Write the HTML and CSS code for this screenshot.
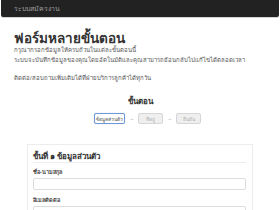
FILE: index.html
```html
<!DOCTYPE html>
<html lang="th">
<head>
<meta charset="utf-8">
<link rel="stylesheet" href="styles.css">
</head>
<body>
<nav class="navbar"><span class="brand">ระบบสมัครงาน</span></nav>
<main class="container">
  <h1 class="title">ฟอร์มหลายขั้นตอน</h1>
  <p class="lead">กรุณากรอกข้อมูลให้ครบถ้วนในแต่ละขั้นตอนนี้</p>
  <p class="lead">ระบบจะบันทึกข้อมูลของคุณโดยอัตโนมัติและคุณสามารถย้อนกลับไปแก้ไขได้ตลอดเวลา</p>
  <p class="note">ติดต่อ/สอบถามเพิ่มเติมได้ที่ฝ่ายบริการลูกค้าได้ทุกวัน</p>
  <section class="steps">
    <div class="steps-title">ขั้นตอน</div>
    <div class="steps-row">
      <span class="step active">ข้อมูลส่วนตัว</span>
      <span class="arrow">→</span>
      <span class="step">ที่อยู่</span>
      <span class="arrow">→</span>
      <span class="step">ยืนยัน</span>
    </div>
  </section>
  <section class="card">
    <h2 class="card-title">ขั้นที่ ๑ ข้อมูลส่วนตัว</h2>
    <label class="label">ชื่อ-นามสกุล</label>
    <div class="input"></div>
    <label class="label">อีเมลติดต่อ</label>
    <div class="input"></div>
  </section>
</main>
</body>
</html>
```
FILE: styles.css
```css
html, body {
  margin: 0;
  padding: 0;
  background: #fff;
}
body {
  font-family: "Liberation Sans", Arial, sans-serif;
  color: #333;
  width: 280px;
  height: 210px;
  overflow: hidden;
}
.navbar {
  height: 17px;
  margin: 0 1px;
  background: #222;
  border-bottom: 1px solid #d4d4d4;
  border-radius: 0 0 3px 3px;
  display: flex;
  align-items: center;
  padding-left: 13px;
}
.brand {
  color: #9d9d9d;
  font-size: 7px;
  line-height: 8px;
}
.container {
  padding: 0 14px;
}
.title {
  margin: 14px 0 0;
  font-size: 13.5px;
  line-height: 13px;
  font-weight: bold;
  color: #333;
}
.lead {
  margin: 1px 0 0;
  font-size: 6px;
  line-height: 8px;
  color: #555;
}
.lead + .lead {
  margin-top: 2px;
}
.note {
  margin: 10px 0 0;
  font-size: 6px;
  line-height: 8px;
  color: #555;
}
.steps {
  margin-top: 15px;
  display: flex;
  flex-direction: column;
  align-items: center;
}
.steps-title {
  font-size: 8px;
  font-weight: bold;
  line-height: 9px;
  color: #333;
}
.steps-row {
  margin-top: 7px;
  padding-left: 15px;
  display: flex;
  align-items: center;
  gap: 4px;
}
.step {
  box-sizing: border-box;
  width: 25px;
  height: 11px;
  display: flex;
  align-items: center;
  justify-content: center;
  font-size: 5px;
  border: 1px solid #d6d6d6;
  border-radius: 2px;
  background: #efefef;
  color: #b0b0b0;
}
.step.active {
  width: 31px;
  background: #fff;
  border-color: #6d97d8;
  box-shadow: 0 0 1px #9fbde8;
  color: #555;
}
.arrow {
  width: 5px;
  text-align: center;
  font-size: 5px;
  line-height: 5px;
  color: #888;
}
.card {
  margin: 20px 13px 0;
  border: 1px solid #ececec;
  padding: 7px 6px 0 5px;
}
.card-title {
  margin: 0 0 6px;
  padding: 0;
  border-bottom: 1px solid #eee;
  font-size: 8px;
  line-height: 10px;
  font-weight: bold;
  color: #333;
}
.label {
  display: block;
  font-size: 5.5px;
  line-height: 7px;
  font-weight: bold;
  color: #444;
  margin: 0 0 2px;
}
.input {
  height: 10px;
  border: 1px solid #ddd;
  border-radius: 2px;
  margin-bottom: 7px;
}
```
